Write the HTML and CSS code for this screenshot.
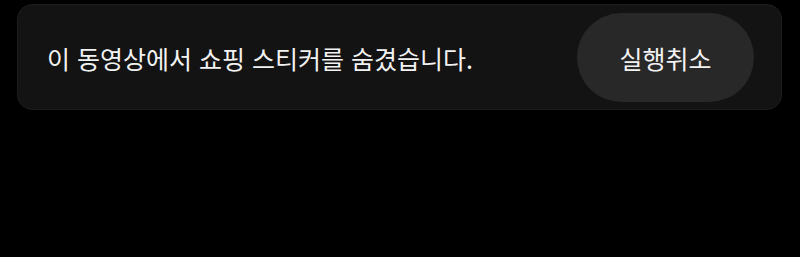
FILE: index.html
```html
<!DOCTYPE html>
<html lang="ko">
<head>
<meta charset="utf-8">
<link rel="stylesheet" href="styles.css">
</head>
<body>
<div class="toast">
  <span class="msg">이 동영상에서 쇼핑 스티커를 숨겼습니다.</span>
  <button class="undo">실행취소</button>
</div>
</body>
</html>
```
FILE: styles.css
```css
html, body {
  margin: 0;
  padding: 0;
  background: #000;
  height: 100%;
}
body {
  padding: 4px 18px 0 17px;
  box-sizing: border-box;
}
.toast {
  display: flex;
  align-items: center;
  justify-content: space-between;
  height: 106px;
  box-sizing: border-box;
  padding: 0 27px 0 29px;
  background: #131313;
  border: 1px solid #1d1d1d;
  border-radius: 15px;
  font-family: "Noto Sans CJK KR", "Noto Sans", sans-serif;
  color: #f2f2f2;
}
.msg {
  font-size: 25px;
  padding-top: 2px;
}
.undo {
  width: 177px;
  height: 89px;
  border: none;
  border-radius: 45px;
  background: #282828;
  color: #f2f2f2;
  font-family: "Noto Sans CJK KR", "Noto Sans", sans-serif;
  font-size: 25px;
  padding: 2px 0 0;
}
```
